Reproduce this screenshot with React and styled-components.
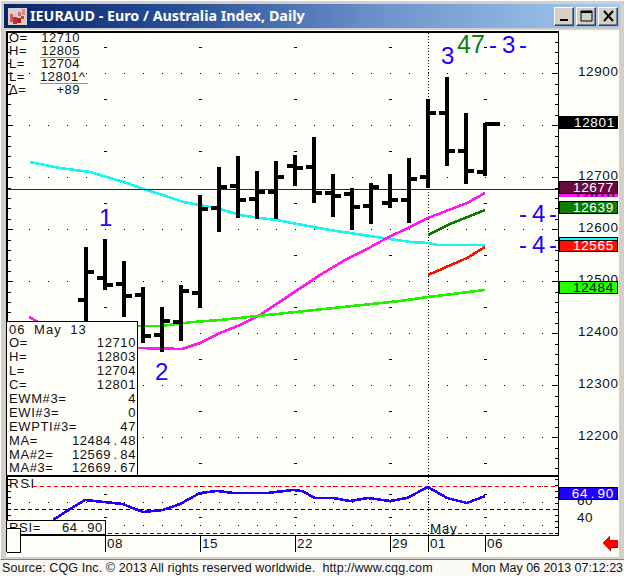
import React from "react";
import styled, { createGlobalStyle } from "styled-components";

const Global = createGlobalStyle`
  html, body { margin: 0; padding: 0; background: #d4d0c8; }
  #root { width: 624px; height: 576px; overflow: hidden; }
`;

const Window = styled.div`
  width: 624px; height: 576px; box-sizing: border-box;
  display: flex; flex-direction: column;
  background: #d4d0c8;
  padding: 0;
  font-family: "Liberation Sans", Arial, sans-serif;
  color: #000;
`;
const Body = styled.div`
  height: 560px; box-sizing: border-box;
  padding: 4px 4px 2px 4px;
  display: flex; flex-direction: column;
  border-top: 1px solid #fff; border-left: 1px solid #fff;
  border-bottom: 1px solid #808080;
`;
const TitleBar = styled.div`
  height: 24px; flex: none; margin-top: -1px; margin-left: -1px; margin-right: 0;
  display: flex; align-items: center; gap: 3px;
  padding: 0 2px 0 4px;
  background: linear-gradient(90deg, #0a246a 0%, #2a5299 30%, #6d95cc 62%, #a6caf0 100%);
`;
const AppIcon = styled.svg`
  width: 19px; height: 17px; flex: none;
`;
const Title = styled.div`
  flex: 1; color: #fff; font-family: "Noto Sans", "Open Sans", sans-serif; font-weight: 700;
  font-size: 14.3px; line-height: 24px; white-space: nowrap; letter-spacing: 0;
`;
const WinButtons = styled.div`
  display: flex; align-items: center; gap: 2px;
`;
const WinButton = styled.div`
  width: 20px; height: 19px; box-sizing: border-box;
  background: #d4d0c8;
  border: 1px solid; border-color: #fff #404040 #404040 #fff;
  box-shadow: inset -1px -1px 0 #808080;
  display: flex; align-items: center; justify-content: center;
`;
const ChartFrame = styled.div`
  position: relative; flex: none; width: 613px; height: 527px; margin: 2px 0 0 1px;
  background: #fffffa;
  overflow: hidden;
`;
const ChartSvg = styled.svg`
  display: block; width: 613px; height: 527px;
  font-family: "Liberation Sans", Arial, sans-serif;
`;
const QuoteBox = styled.div`
  position: absolute; left: 3px; top: 1px; width: 71px;
  font-size: 13px; line-height: 13px; letter-spacing: .5px; color: #111;
`;
const QuoteRow = styled.div`
  display: flex; justify-content: space-between; height: 13px;
`;
const QuoteValue = styled.span`
  width: ${p => p.$wide ? 48 : 40}px; box-sizing: border-box; text-align: ${p => p.$wide ? "left" : "right"}; margin-right: ${p => p.$wide ? -8 : 0}px;
  height: 14px;
  ${p => p.$rule ? "border-bottom: 1px solid #22dd22;" : ""}
`;
const DataBox = styled.div`
  position: absolute; left: 1px; top: 291px; width: 131px; height: 154px; box-sizing: border-box;
  background: #fffffa; border: 1px solid #000; border-left: 0; border-bottom: 0;
  padding: 1px 1px 0 2px;
  font-size: 13px; color: #111; letter-spacing: .6px;
`;
const DataHead = styled.div`
  height: 13px; line-height: 14px; word-spacing: 4px; letter-spacing: 1px;
`;
const DataRow = styled.div`
  display: flex; justify-content: space-between; height: 13.95px; line-height: 14px;
`;
const Dot = styled.span`
  margin: 0 2.5px;
`;
const RsiBox = styled.div`
  position: absolute; left: 1px; top: 490px; width: 99px; height: 15px; box-sizing: border-box;
  background: #fffffa; border: 1px solid #000; border-left: 0;
  display: flex; justify-content: space-between; padding: 0 2px 0 2px;
  font-size: 13px; line-height: 14px; letter-spacing: .7px; color: #111;
`;
const Corner = styled.div`
  position: absolute; left: 1px; top: 498px; width: 14px; height: 25px; box-sizing: border-box;
  background: #fffffa; border: 1px solid #000; border-left: 0;
`;
const Tag = styled.div`
  position: absolute; left: 553px; top: ${p => p.$top}px; width: 59px; height: ${p => p.$h}px;
  box-sizing: border-box; background: ${p => p.$bg};
  border: ${p => p.$plain ? "0" : "1px solid #000"};
  color: ${p => p.$fg}; font-size: 13.5px; letter-spacing: .7px; line-height: ${p => p.$plain ? p.$h : p.$h - 2}px;
  text-align: right; padding-right: 3px;
  ${p => p.$clip ? "overflow: hidden;" : ""}
`;
const StatusBar = styled.div`
  flex: 1; display: flex; justify-content: space-between; align-items: center;
  background: #fbfaf6; padding: 0 1px 0 2px;
  font-size: 12.5px; color: #111; white-space: pre;
`;
const Source = styled.span`
  letter-spacing: .1px;
`;
const Stamp = styled.span`
  letter-spacing: -.03px;
`;

const BLUE = "#2200ff";
const bars = [
  [86, 247, 330, 300, 272], [105, 239, 290, 278, 285], [124, 261, 317, 284, 296], [143, 287, 343, 295, 336],
  [162, 307, 352, 335, 321], [181, 285, 341, 322, 291], [200, 195, 308, 293, 209], [219, 167, 232, 208, 187],
  [238, 156, 218, 186, 200], [257, 171, 219, 199, 192], [276, 161, 219, 192, 177], [295, 155, 186, 166, 168],
  [314, 137, 203, 167, 193], [333, 174, 217, 193, 196], [352, 188, 230, 194, 207], [371, 183, 224, 206, 187],
  [390, 174, 208, 203, 200], [409, 158, 223, 200, 179], [428, 99, 188, 177, 113], [447, 77, 166, 113, 151],
  [466, 113, 184, 151, 171], [485, 123, 176, 172, 124],
];
const pts = a => a.map(p => p.join(",")).join(" ");
const cyan = [[30,162],[60,168],[90,172],[130,184],[143,189],[163,195],[183,202],[200,205],[220,209],[240,215],[260,218],[277,220],[297,224],[330,230],[363,235],[390,239],[410,242],[428,243],[438,245],[485,245]];
const magentaA = [[29,317],[38,322]];
const magentaB = [[138,348],[182,349],[200,343],[220,333],[240,325],[260,315],[290,295],[320,275],[345,260],[367,249],[387,238],[410,227],[428,218],[467,203],[485,193]];
const lime = [[138,326],[160,326],[193,322],[220,320],[400,301],[428,297],[485,290]];
const dgreen = [[428,235],[450,224],[470,216],[485,210]];
const red = [[428,275],[467,258],[485,247]];
const rsi = [[53,520],[70,509],[85,500],[123,504],[130,507],[143,512],[163,510],[180,504],[200,493],[217,491],[233,493],[267,493],[293,490],[302,491],[315,498],[333,498],[350,501],[368,498],[390,501],[407,498],[428,487],[447,498],[467,503],[485,496]];

const xs = []; for (let x = 29; x <= 542; x += 19) xs.push(x);
const dotRows = [73,125,177,229,281,333,385,437,486,502,525];
const dashRows = [47,99,151,203,255,307,359,411,463,494,517];
const priceLabels = [[12900,73],[12700,177],[12600,229],[12500,281],[12400,333],[12300,385],[12200,437]];
const dateTicks = [[105,"08"],[200,"15"],[295,"22"],[390,"29"],[428,"01"],[485,"06"]];

function Chart() {
  const axisTicks = [];
  for (let y = 42; y < 472; y += 10.4) {
    const major = Math.abs(((y - 73) / 52) - Math.round((y - 73) / 52)) < .01;
    axisTicks.push(<rect key={"r"+y} x={major ? 552 : 555} y={Math.round(y)} width={major ? 6 : 3} height="1" fill="#000" />);
    axisTicks.push(<rect key={"l"+y} x="8" y={Math.round(y)} width={major ? 5 : 3} height="1" fill="#000" />);
  }
  for (let y = 479; y < 534; y += 6) {
    axisTicks.push(<rect key={"rr"+y} x="555" y={y} width="3" height="1" fill="#000" />);
    axisTicks.push(<rect key={"ll"+y} x="8" y={y} width="3" height="1" fill="#000" />);
  }
  const vdots = [];
  for (let y = 33; y < 535; y += 3) vdots.push(<rect key={y} x="428" y={y} width="1" height="1" fill="#000" />);
  return (
    <ChartSvg viewBox="6 30 613 527" shapeRendering="crispEdges">
      {dotRows.map(y => xs.map(x => <rect key={x + "-" + y} x={x} y={y} width="1" height="1" fill="#000" />))}
      {dashRows.map(y => [105,200,295,390,485].map(x => <rect key={x + "_" + y} x={x - 1} y={y} width="3" height="1" fill="#000" />))}
      {vdots}
      <polyline points={pts(cyan)} fill="none" stroke="#19f3f3" strokeWidth="2.6" />
      <polyline points={pts(magentaA)} fill="none" stroke="#ff19f0" strokeWidth="2.6" />
      <polyline points={pts(magentaB)} fill="none" stroke="#ff19f0" strokeWidth="2.6" />
      <polyline points={pts(lime)} fill="none" stroke="#22f000" strokeWidth="2.6" />
      <polyline points={pts(dgreen)} fill="none" stroke="#117a00" strokeWidth="2.6" />
      <polyline points={pts(red)} fill="none" stroke="#ff1100" strokeWidth="2.6" />
      <rect x="7" y="189" width="551" height="1" fill="#5e0a38" />
      {bars.map(([x, hi, lo, o, c], i) => (
        <g key={x} fill="#000">
          <rect x={x - 2} y={hi} width="4" height={lo - hi} />
          <rect x={x - 8} y={o - 2} width="7" height="4" />
          <rect x={x} y={c - 2} width={i === bars.length - 1 ? 15 : 8} height="4" />
        </g>
      ))}

      <g fill="#111" fontSize="13.5" letterSpacing=".6" shapeRendering="auto">
        {priceLabels.map(([p, y]) => <text key={p} x="578" y={y + 3}>{p}</text>)}
        <text x="577" y="505">60</text>
        <text x="577" y="522">40</text>
        {dateTicks.map(([x, l]) => <text key={x} x={x + 2} y="548">{l}</text>)}
        <text x="430" y="533">May</text>
        <text x="9" y="488" letterSpacing="1.4">RSI</text>
      </g>
      <g fill={BLUE} fontSize="24">
        <text x="99" y="226">1</text>
        <text x="155" y="380">2</text>
        <text x="441" y="64">3</text>
        <text x="457" y="53" fill="#0e7c12" fontSize="25">47</text>
        <text x="489" y="53">-</text>
        <text x="502" y="53">3</text>
        <text x="519" y="53">-</text>
        <text x="519" y="222">-</text>
        <text x="532" y="222">4</text>
        <text x="549" y="222">-</text>
        <text x="519" y="253">-</text>
        <text x="532" y="253">4</text>
        <text x="549" y="253">-</text>
      </g>

      <line x1="33" x2="558" y1="486.5" y2="486.5" stroke="#ff0000" strokeDasharray="4 3" />
      <line x1="7" x2="558" y1="509.5" y2="509.5" stroke="#000" strokeDasharray="4 3" />
      <line x1="108" x2="558" y1="533.5" y2="533.5" stroke="#1a00ee" strokeDasharray="4 3" />
      <polyline points={pts(rsi)} fill="none" stroke={BLUE} strokeWidth="2.6" />

      {axisTicks}
      <rect x="6" y="31" width="553" height="2" fill="#000" />
      <rect x="6" y="31" width="2" height="521" fill="#000" />
      <rect x="558" y="31" width="1" height="505" fill="#000" />
      <rect x="6" y="475" width="553" height="2" fill="#000" />
      <rect x="6" y="535" width="553" height="1" fill="#000" />
      {dateTicks.map(([x]) => <rect key={x} x={x} y="535" width="1" height="17" fill="#000" />)}

      <path d="M602 543 L610 536 L610 540 L618 540 L618 547 L610 547 L610 550 Z" fill="#ff0000" stroke="none" />
      <path d="M602 543 L610 550 L610 547 L618 547 L618 548 L611 548 L611 552 Z" fill="#a00000" stroke="none" />
    </ChartSvg>
  );
}

const Num = ({ v }) => {
  const [a, b] = v.split(".");
  return b === undefined ? <span>{a}</span> : <span>{a}<Dot>.</Dot>{b}</span>;
};

const quote = [["O=", "12710"], ["H=", "12805", true], ["L=", "12704"], ["L=", "12801^", true, true], ["Δ=", "+89"]];
const data = [["O=","12710"],["H=","12803"],["L=","12704"],["C=","12801"],["EWM#3=","4"],["EWI#3=","0"],["EWPTI#3=","47"],["MA=","12484.48"],["MA#2=","12569.84"],["MA#3=","12669.67"]];

export default function App() {
  return (
    <Window>
      <Global />
      <Body>
        <TitleBar>
          <AppIcon viewBox="0 0 19 17">
            <rect width="19" height="17" fill="#d8cfcf" />
            <rect x="2" y="6" width="3" height="8" fill="#c9605f" />
            <rect x="5" y="9" width="4" height="7" fill="#c52f2f" />
            <rect x="10" y="4" width="3" height="4" fill="#d07070" />
            <rect x="9" y="10" width="4" height="5" fill="#b82020" />
            <rect x="14" y="1" width="3" height="6" fill="#d98a8a" />
            <rect x="13" y="8" width="3" height="3" fill="#c84040" />
          </AppIcon>
          <Title>IEURAUD - Euro / Australia Index, Daily</Title>
          <WinButtons>
            <WinButton>
              <svg width="12" height="11" viewBox="0 0 12 11"><rect x="2" y="8" width="8" height="2" fill="#000" /></svg>
            </WinButton>
            <WinButton>
              <svg width="13" height="12" viewBox="0 0 13 12"><path d="M1 1h11v10H1z M1 1.5h11" fill="none" stroke="#000" strokeWidth="1" /><rect x="1" y="1" width="11" height="2" fill="#000" /></svg>
            </WinButton>
            <WinButton>
              <svg width="13" height="12" viewBox="0 0 13 12"><path d="M2 1l9 10M11 1l-9 10" stroke="#000" strokeWidth="2" fill="none" /></svg>
            </WinButton>
          </WinButtons>
        </TitleBar>
        <ChartFrame>
          <Chart />
          <QuoteBox>
            {quote.map(([k, v, rule, wide], i) => (
              <QuoteRow key={i}>
                <span>{k}</span>
                <QuoteValue $rule={rule} $wide={wide}>{v}</QuoteValue>
              </QuoteRow>
            ))}
          </QuoteBox>
          <DataBox>
            <DataHead>06 May 13</DataHead>
            {data.map(([k, v]) => (
              <DataRow key={k}><span>{k}</span><Num v={v} /></DataRow>
            ))}
          </DataBox>
          <RsiBox><span>RSI=</span><Num v="64.90" /></RsiBox>
          <Corner />
          <Tag $top={86} $h={13} $bg="#000" $fg="#fff" $plain>12801</Tag>
          <Tag $top={163} $h={4} $bg="#ff19f0" $fg="#111" $plain $clip>12670</Tag>
          <Tag $top={151} $h={13} $bg="#660a40" $fg="#fff">12677</Tag>
          <Tag $top={171} $h={13} $bg="#117a00" $fg="#fff">12639</Tag>
          <Tag $top={207} $h={4} $bg="#19f3f3" $fg="#19f3f3" />
          <Tag $top={210} $h={12} $bg="#ff1100" $fg="#fff">12565</Tag>
          <Tag $top={251} $h={13} $bg="#22ff00" $fg="#000">12484</Tag>
          <Tag $top={457} $h={13} $bg={BLUE} $fg="#fff"><Num v="64.90" /></Tag>
        </ChartFrame>
      </Body>
      <StatusBar>
        <Source>Source: CQG Inc. © 2013 All rights reserved worldwide.  http://www.cqg.com</Source>
        <Stamp>Mon May 06 2013 07:12:23</Stamp>
      </StatusBar>
    </Window>
  );
}
